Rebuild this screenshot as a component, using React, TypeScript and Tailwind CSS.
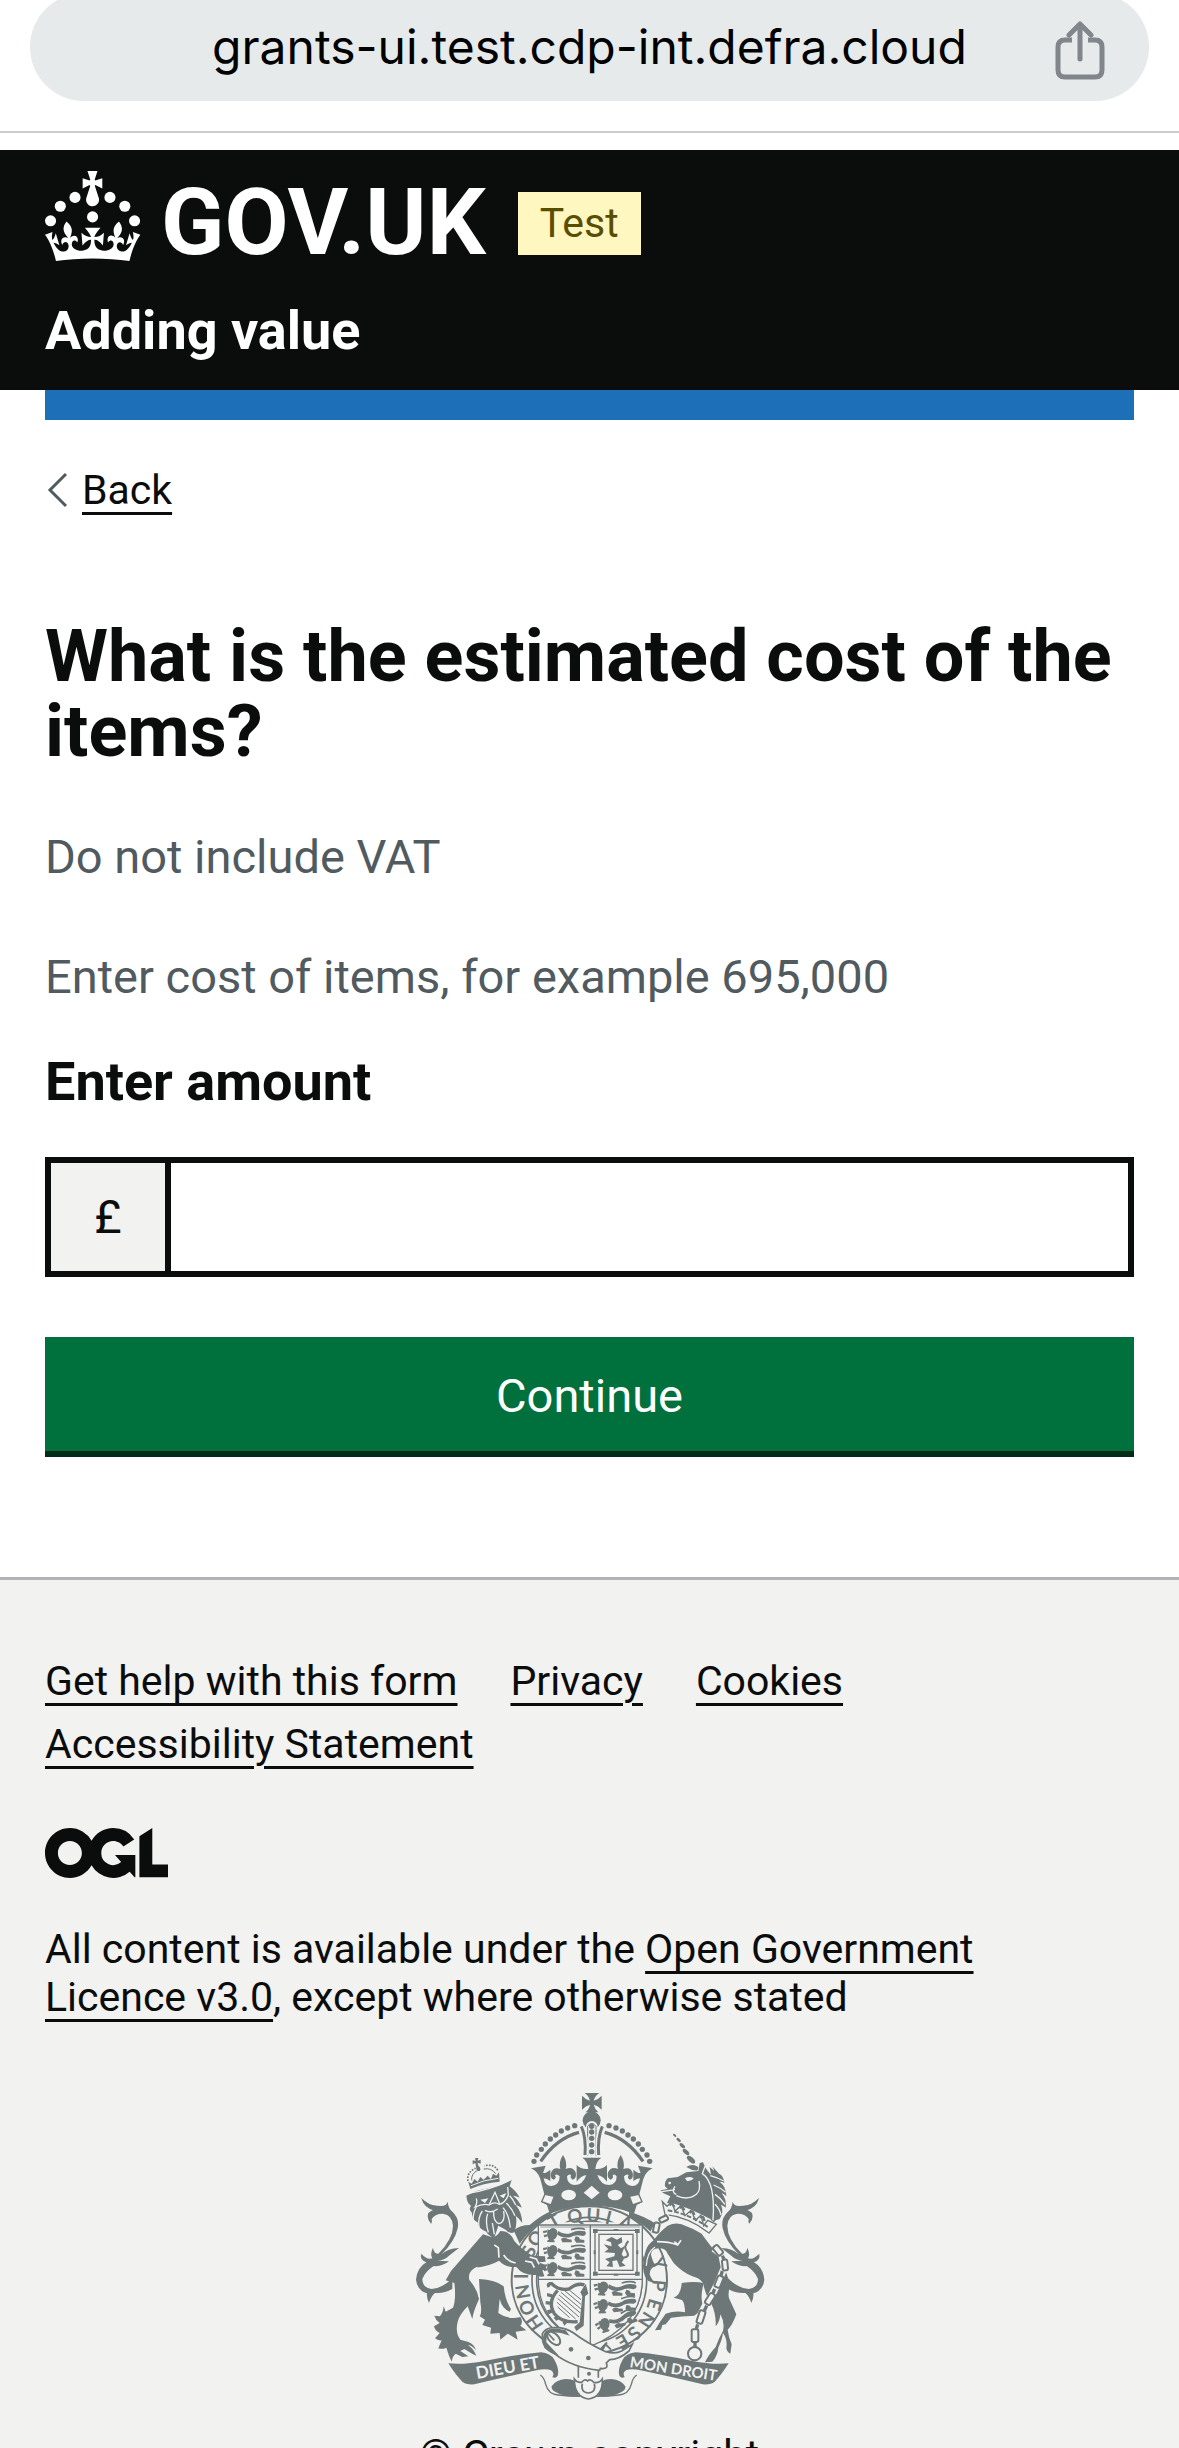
import React from 'react';

const linkClass =
  'underline decoration-[3px] underline-offset-[8px] hover:decoration-[6px]';

function ShareIcon() {
  return (
    <svg viewBox="0 0 50 60" className="h-[60px] w-[50px]" fill="none" stroke="#80868b" strokeWidth="5" aria-hidden="true">
      <path d="M17 19H10Q3 19 3 26V49Q3 56 10 56H40Q47 56 47 49V26Q47 19 40 19H33" />
      <path d="M25 38V4M14 14L25 3L36 14" strokeLinecap="round" strokeLinejoin="round" />
    </svg>
  );
}

function GovCrown() {
  return (
    <svg viewBox="0 0 64 60" className="h-[90px] w-24" fill="#fff" aria-hidden="true">
      <circle cx="20" cy="17.6" r="3.7" />
      <circle cx="10.2" cy="23.5" r="3.7" />
      <circle cx="3.7" cy="33.2" r="3.7" />
      <circle cx="31.7" cy="30.6" r="3.7" />
      <circle cx="43.3" cy="17.6" r="3.7" />
      <circle cx="53.2" cy="23.5" r="3.7" />
      <circle cx="59.7" cy="33.2" r="3.7" />
      <path d="M33.1,9.8c.2-.1.3-.3.5-.5l4.6,2.4v-6.8l-4.6,1.5c-.1-.2-.3-.3-.5-.5l1.9-5.9h-6.7l1.9,5.9c-.2.1-.3.3-.5.5l-4.6-1.5v6.8l4.6-2.4c.1.2.3.3.5.5l-2.6,8c-.9,2.8,1.2,5.7,4.1,5.7h0c3,0,5.1-2.9,4.1-5.7l-2.6-8ZM37,37.9s-3.4,3.8-4.1,6.1c2.2,0,4.2-.5,6.4-2.8l-.7,8.5c-2-2.8-4.4-4.1-5.7-3.8.1,3.1.5,6.7,5.8,7.2,3.7.3,6.7-1.5,7-3.8.4-2.6-2-4.3-3.7-1.6-1.4-4.5,2.4-6.1,4.9-3.2-1.9-4.5-1.8-7.7,2.4-10.9,3,4,2.6,7.3-1.2,11.1,2.4-1.3,6.2,0,4,4.6-1.2-2.8-3.7-2.2-4.2.2-.3,1.7.7,3.7,3,4.2,1.9.3,4.7-.9,7-5.9-1.3,0-2.4.7-3.9,1.7l2.4-8c.6,2.3,1.4,3.7,2.2,4.5.6-1.6.5-2.8,0-5.3l5,1.8c-2.6,3.6-5.2,8.7-7.3,17.5-7.4-1.1-15.7-1.7-24.5-1.7h0c-8.8,0-17.1.6-24.5,1.7-2.1-8.9-4.7-13.9-7.3-17.5l5-1.8c-.5,2.5-.6,3.7,0,5.3.8-.8,1.6-2.3,2.2-4.5l2.4,8c-1.5-1-2.6-1.7-3.9-1.7,2.3,5,5.2,6.2,7,5.9,2.3-.4,3.3-2.4,3-4.2-.5-2.4-3-3.1-4.2-.2-2.2-4.6,1.6-6,4-4.6-3.7-3.7-4.2-7.1-1.2-11.1,4.2,3.2,4.3,6.4,2.4,10.9,2.5-2.8,6.3-1.3,4.9,3.2-1.8-2.7-4.1-1-3.7,1.6.3,2.3,3.3,4.1,7,3.8,5.4-.5,5.7-4.2,5.8-7.2-1.3-.2-3.7,1-5.7,3.8l-.7-8.5c2.2,2.3,4.2,2.7,6.4,2.8-.7-2.3-4.1-6.1-4.1-6.1h10.6,0Z" />
    </svg>
  );
}

function OglLogo() {
  return (
    <svg viewBox="0 0 483.2 195.7" className="h-[50px] w-[123px]" fill="#0b0c0c" role="img" aria-label="Open Government Licence">
      <path d="M421.5 142.8V.1l-50.7 32.3v161.1h112.4v-50.7zm-122.3-9.6A47.12 47.12 0 0 1 221 97.8c0-26 21.1-47.1 47.1-47.1 16.7 0 31.4 8.7 39.7 21.8l42.7-27.2A97.63 97.63 0 0 0 268.1 0c-36.5 0-68.3 20.1-85.1 49.7A98 98 0 0 0 97.8 0C43.9 0 0 43.9 0 97.8s43.9 97.8 97.8 97.8c36.5 0 68.3-20.1 85.1-49.7a97.76 97.76 0 0 0 149.6 25.4l19.4 22.2h3v-87.8h-80l24.3 27.5zM97.8 145c-26 0-47.1-21.1-47.1-47.1s21.1-47.1 47.1-47.1 47.1 21.1 47.1 47.1S123.8 145 97.8 145" />
    </svg>
  );
}

const INK = '#6d7777';
const PAPER = '#f2f2f0';

/* Letters of the garter motto: glyph, centre x, centre y, rotation. */
const motto: [string, number, number, number][] = [
  ['H', 406, 731, -124],
  ['O', 384, 686, -110],
  ['N', 371, 638, -99],
  ['I', 367, 592, -90],
  ['S', 389, 517, -68],
  ['O', 410, 478, -55],
  ['T', 466, 427, -30],
  ['Q', 527, 411, -12],
  ['U', 583, 408, 4],
  ['I', 629, 415, 14],
  ['A', 680, 432, 26],
  ['Y', 780, 553, 68],
  ['P', 780, 620, 95],
  ['E', 766, 677, 107],
  ['N', 743, 723, 122],
  ['S', 706, 763, 135],
  ['E', 671, 787, 150],
];

const crownBeads: [number, number][] = [
  [405, 247], [413, 228], [427, 211], [439, 195], [454, 180], [470, 168], [487, 156], [506, 147], [527, 140],
];

/* Segments of the unicorn's horn: x, y, half length. */
const horn: [number, number, number][] = [
  [827, 169, 6], [839, 183, 8], [850, 200, 10], [861, 219, 12], [876, 242, 15],
];

/* One heraldic lion passant, 140 x 48. */
function Passant({ x, y, tilt = 0 }: { x: number; y: number; tilt?: number }) {
  return (
    <g transform={`translate(${x} ${y}) rotate(${tilt})`}>
      <path d="M12 4q5 6 9-1q10-5 18 4q4 8 2 14q-2 10-12 16q8 3 2 7l-20-1q-2-6 5-7q-9-12-4-32z" />
      <path d="M-2 10l12-2v6l-11 3zM0 22l11-2v6l-9 3z" />
      <path d="M44 10q18 14 40 5q16-9 40-4q8 10-6 14q-24-6-36 3q-24 6-42-8z" />
      <path d="M52 34q10-8 20 0l12 2v8H56zM96 26q14 2 12 9l14 2v8H98l-6-9z" />
      <path d="M82 6Q112-2 124 6" fill="none" stroke={INK} strokeWidth="5" />
    </g>
  );
}

function Tail() {
  return (
    <g>
      <path d="M67 357Q92 382 118 380Q142 384 146 368Q148 388 160 398Q182 418 176 448Q168 486 128 526Q146 508 180 507Q160 522 150 530Q136 544 116 545L150 547Q128 564 104 561Q78 578 70 600Q70 626 98 630Q130 628 160 598L160 630Q136 644 108 642Q96 652 90 672Q82 654 84 643Q54 634 51 602Q54 566 82 550Q68 540 68 525Q84 544 100 538Q92 526 102 506Q104 524 118 524Q162 480 162 440Q160 408 132 404Q108 404 98 420Q100 432 96 434Q82 420 88 402Q96 394 104 392Q78 388 68 357Z" />
      <path d="M67 357Q84 380 118 382L110 396Q74 388 67 357Z" />
      <path d="M84 550Q62 545 66 524Q76 543 92 544Z" />
    </g>
  );
}

function Lion() {
  return (
    <g>
      {/* hind quarters, chest and reaching fore leg */}
      <path d="M252 466L156 576L140 604L166 612Q172 660 162 686L140 698L134 682Q132 704 122 712L106 710Q110 724 122 732L105 742Q108 756 122 762L108 778Q118 786 128 784L118 808Q130 812 142 806L150 830L158 848Q160 832 170 824L190 834L208 832L184 816L196 810L222 826L232 830Q222 806 206 798Q222 800 230 814Q228 796 206 788L184 782Q168 760 176 728Q182 706 206 682L220 720Q222 700 240 660Q240 636 216 606Q204 580 230 566Q270 562 300 545Q320 566 352 564Q372 590 410 588Q424 596 436 592L430 574L442 572L440 558L418 550L440 548L438 532L400 530Q366 510 346 486Q334 456 304 456Q290 480 270 472Z" />
      <path d="M236 566Q208 578 214 602Q238 630 242 656" fill="none" stroke={PAPER} strokeWidth="6" />
      <path d="M286 498L298 506L300 536M314 528Q326 548 350 552M378 546L398 550L406 566M392 534L412 540L420 556" fill="none" stroke={PAPER} strokeWidth="5" />
      {/* far hind leg */}
      <path d="M240 600Q290 602 314 622Q318 664 336 690L332 698Q310 690 302 660L298 702Q328 724 364 714Q374 728 364 740L382 754L350 758L356 782L326 764L304 782L302 762L274 764L276 746L250 738L258 722L242 712Q250 700 244 670Z" />
      {/* far shoulder behind the garter */}
      <path d="M344 454Q364 438 392 438Q424 410 452 398L462 408Q402 436 362 494Z" />
      {/* mane */}
      <path d="M202 350L232 336L306 318L338 302L332 322Q350 334 362 356Q350 350 342 350Q362 366 368 386Q358 380 350 378Q368 398 370 432Q360 418 350 410Q356 430 346 460Q332 466 320 452L298 440L286 476Q268 470 262 458Q238 450 236 430Q220 424 218 400Q208 392 216 380Q204 374 202 350Z" />
      <g fill="none" stroke={PAPER} strokeWidth="4">
        <path d="M202 344Q270 334 336 302" />
        <path d="M232 358Q236 372 228 384Q254 372 270 378Q288 366 300 376Q318 374 328 348L326 324" />
        <path d="M232 384Q224 396 222 420M250 396Q236 416 240 444M266 404Q258 426 268 460M280 432L286 466" />
        <path d="M312 386Q330 406 334 446M322 372Q340 390 348 410M332 350Q342 360 350 378" />
        <path d="M284 398Q282 428 300 434Q320 430 314 396M270 378L288 340L302 374M258 394Q276 404 296 390" />
      </g>
      <path d="M244 362L268 358L258 372ZM302 350L322 342L314 358Z" fill={PAPER} />
      {/* crown worn by the lion */}
      <path d="M208 308L214 330Q252 312 302 308L300 280L292 290L282 284L276 300L266 290L254 302L244 294L236 308L226 300L218 314Z" />
      <path d="M216 320Q254 302 298 298" fill="none" stroke={PAPER} strokeWidth="3" />
      <path d="M207 306Q202 280 230 268M296 274Q286 254 256 260" fill="none" stroke={INK} strokeWidth="5" strokeDasharray="5 4" />
      <path d="M218 304Q216 284 236 274M290 284Q278 266 254 270" fill="none" stroke={INK} strokeWidth="3" />
      <path d="M228 237h10l-2 8 9-3v12l-9-3 2 9q10 8 4 16q-10 2-10-8l-3-16-8 4v-12l9 2z" />
    </g>
  );
}

function Unicorn() {
  return (
    <g>
      {/* body and near hind leg */}
      <path d="M734 580Q728 550 740 516Q746 496 764 484Q780 460 806 440Q836 426 862 442Q886 450 908 464Q926 490 954 524Q978 550 982 582L994 618Q986 640 990 658L1012 706Q1000 740 986 752Q988 772 998 796L994 824Q984 820 982 808Q986 780 972 762Q970 780 958 806Q956 830 940 848L918 850Q928 828 950 804Q960 776 972 756Q978 730 964 706Q962 730 950 742Q952 704 936 672Q920 650 912 612Q900 596 880 592Q850 580 824 552L806 524Q800 508 780 508Q756 508 756 528Q760 546 770 562Q752 566 752 586Q758 604 772 614L748 606Q736 594 734 580Z" />
      <path d="M774 488Q810 488 836 498L846 484M826 488L838 498" fill="none" stroke={PAPER} strokeWidth="5" />
      <path d="M742 560Q744 520 768 504" fill="none" stroke={PAPER} strokeWidth="4" />
      {/* far hind leg */}
      <path d="M848 612Q886 606 914 612Q904 650 910 674Q902 690 896 702L886 710Q846 712 816 716L800 736L790 738L786 752L768 754Q782 728 800 704Q830 694 858 700Q858 676 850 664Q836 658 824 656Q846 648 848 612Z" />
      {/* head */}
      <path d="M785 334L806 330L798 322Q796 308 806 298L836 294L862 280L898 276L902 252L912 250L920 268L936 288L932 264L946 276L940 262L960 284Q974 290 976 312Q970 308 962 308Q982 324 982 352Q976 344 968 342Q984 362 980 386Q972 378 966 378Q976 398 962 420L950 424Q944 436 934 420Q880 390 826 374L804 372L814 352L792 342Z" />
      <g fill="none" stroke={PAPER} strokeWidth="4">
        <path d="M832 350Q866 366 892 346Q906 334 900 306M918 262L910 284Q950 310 942 424" />
        <path d="M934 290Q956 296 974 306M944 318Q964 326 980 340M948 346Q966 358 978 376M948 376Q962 390 966 408" />
        <path d="M788 338L828 332M832 346Q816 340 828 322" />
      </g>
      <path d="M858 298q12-8 26 0q-6 10-20 8z" fill={PAPER} />
      <circle cx="812" cy="312" r="4" fill={PAPER} />
      <path d="M862 264Q880 252 898 264L896 274Q880 276 862 264Z" />
      {horn.map(([x, y, r]) => (
        <ellipse key={x} cx={x} cy={y} rx={r} ry={r / 2} transform={`rotate(42 ${x} ${y})`} />
      ))}
      {/* coronet collar */}
      <path d="M790 368L798 406Q870 414 930 462L952 436L926 424L914 440L906 408L890 424L876 394L858 410L846 380L828 396L818 368L804 382Z" fill={PAPER} stroke={INK} strokeWidth="4" />
      <path d="M806 394Q870 404 926 444" fill="none" stroke={INK} strokeWidth="6" strokeDasharray="14 6" />
      <path d="M812 380q8-12 14 4M842 388q8-12 14 6M872 402q10-12 14 6M904 418q10-12 12 8" fill="none" stroke={INK} strokeWidth="7" />
      {/* chain */}
      <g fill="none" stroke={PAPER} strokeWidth="21">
        <path d="M764 462L780 430L812 414M944 508L968 526L976 566L954 618L932 660L906 716L888 768L888 800" />
      </g>
      <g fill={PAPER} stroke={INK} strokeWidth="6">
        <rect x="-8" y="-15" width="16" height="30" rx="5" transform="translate(772 446) rotate(12)" />
        <rect x="-7" y="-13" width="14" height="26" rx="5" transform="translate(794 420) rotate(65)" />
        <rect x="-9" y="-16" width="18" height="32" rx="6" transform="translate(957 514) rotate(-40)" />
        <rect x="-8" y="-16" width="16" height="32" rx="6" transform="translate(978 558) rotate(-6)" />
        <rect x="-9" y="-18" width="18" height="36" rx="6" transform="translate(960 608) rotate(22)" />
        <rect x="-9" y="-18" width="18" height="36" rx="6" transform="translate(933 660) rotate(32)" />
        <rect x="-9" y="-20" width="18" height="40" rx="6" transform="translate(906 714) rotate(18)" />
        <rect x="-10" y="-19" width="20" height="38" rx="5" transform="translate(888 770)" />
        <circle cx="887" cy="824" r="20" />
      </g>
      <path d="M888 790v14M896 736l-4 14M923 680l-7 16M947 630l-6 14M970 576l-4 14M970 530l6 12" stroke={INK} strokeWidth="10" />
    </g>
  );
}

function ImperialCrown() {
  return (
    <g>
      <path d="M557 42H601Q588 50 584 65Q598 62 608 50V92Q598 80 584 77Q588 92 598 100H559Q570 92 573 77Q560 80 549 92V50Q560 62 573 65Q569 50 557 42Z" />
      <circle cx="578" cy="124" r="27" />
      <rect x="561" y="126" width="35" height="106" rx="17" fill={PAPER} />
      <path d="M566 230V142Q578 124 591 142V230" fill="none" stroke={INK} strokeWidth="3" />
      {[142, 159, 178, 198, 218].map((y) => (
        <circle key={y} cx="578" cy={y} r="8" />
      ))}
      <path d="M547 142Q562 176 558 228M610 142Q595 176 599 228" fill="none" stroke={PAPER} strokeWidth="18" />
      <path d="M547 142Q562 176 558 228M610 142Q595 176 599 228" fill="none" stroke={INK} strokeWidth="9" />
      {[0, 1].map((side) => (
        <g key={side} transform={side ? 'translate(1157 0) scale(-1 1)' : undefined}>
          {crownBeads.map(([x, y]) => (
            <circle key={x} cx={x} cy={y} r="8" />
          ))}
          <path d="M425 247Q472 178 540 160" fill="none" stroke={INK} strokeWidth="10" />
          {/* half of the rim, with its points and fleur-de-lis */}
          <path d="M396 268L440 260L432 282Q440 284 454 272L454 306Q444 298 434 298Q438 322 458 321Q482 318 482 292Q474 284 468 288Q474 298 464 302Q452 298 456 282Q462 262 484 270Q478 250 492 228Q506 250 500 270Q520 260 530 280Q534 298 522 302Q512 298 516 288Q510 284 504 292Q504 316 526 318Q552 318 562 288Q546 290 533 308V258Q546 272 568 270Q566 246 550 236H580V380Q510 380 452 404L444 378L428 370L436 346L424 300Q416 276 396 268Z" />
          <ellipse cx="509" cy="348" rx="22" ry="16" fill={PAPER} />
          <path d="M438 346L466 352L456 378L428 368Z" fill={PAPER} stroke={INK} strokeWidth="4" />
        </g>
      ))}
      <path d="M578 320L602 341L578 361L554 341Z" fill={PAPER} />
    </g>
  );
}

function Shield() {
  return (
    <g>
      <path d="M418 438H730V600Q730 740 574 802Q418 740 418 600Z" fill={PAPER} stroke={INK} strokeWidth="4" />
      <path d="M424 444H724" stroke={INK} strokeWidth="2" />
      <path d="M574 438V800M418 601H730" stroke={INK} strokeWidth="4" />
      <Passant x={434} y={446} />
      <Passant x={434} y={497} />
      <Passant x={434} y={548} />
      <Passant x={586} y={606} />
      <Passant x={584} y={662} tilt={-6} />
      <Passant x={586} y={726} tilt={-20} />
      {/* lion rampant within a double tressure */}
      <rect x="588" y="454" width="126" height="132" fill="none" stroke={INK} strokeWidth="4" />
      <rect x="600" y="466" width="102" height="108" fill="none" stroke={INK} strokeWidth="4" />
      <path d="M582 450h14v12h-14zM708 450h14v12h-14zM582 578h14v12h-14zM708 578h14v12h-14zM644 450h14v6h-14zM644 584h14v6h-14zM584 514h6v12h-6zM712 514h6v12h-6z" />
      <path d="M638 474L654 482L668 474L670 490L656 498L666 508L678 500L668 526Q680 540 668 550L680 560L662 564L654 544L640 546L642 564L622 562L632 550L618 540L646 532L648 522L616 520L628 510L614 496L638 502L636 490L620 484Z" />
      <path d="M670 536Q694 536 684 518Q672 504 688 486" fill="none" stroke={INK} strokeWidth="6" />
      {/* harp */}
      <path d="M450 624Q444 612 458 614Q480 636 510 630Q536 610 556 618" fill="none" stroke={INK} strokeWidth="10" />
      <path d="M476 634Q444 668 466 704Q488 732 536 728" fill="none" stroke={INK} strokeWidth="10" />
      <path d="M560 614L568 644L558 652L554 740L532 756L526 744L542 730L550 652L544 640Z" />
      <path d="M444 642l16 4v10l-16-4zM440 666l18 2v10l-18-2zM444 694l16-4 4 10-16 6zM464 716l12-8 8 8-12 10zM490 728l10-6 4 10-8 8z" />
      <path d="M486 640L546 690M480 648L544 702M476 658L540 714M474 670L530 720M476 684L512 716M498 636L546 676M512 634L546 662" stroke={INK} strokeWidth="3" />
    </g>
  );
}

function Garter() {
  return (
    <g>
      <ellipse cx="571" cy="603" rx="233" ry="221" fill={PAPER} stroke={INK} strokeWidth="6" />
      <ellipse cx="571" cy="603" rx="172" ry="188" fill="none" stroke={INK} strokeWidth="5" />
      <ellipse cx="571" cy="603" rx="158" ry="176" fill="none" stroke={INK} strokeWidth="5" />
      <path d="M440 430L700 430L730 600L420 600Z" fill={PAPER} />
      <g fontFamily="Lato, sans-serif" fontSize="56" fontWeight="700" textAnchor="middle">
        {motto.map(([ch, x, y, r], i) => (
          <text key={i} transform={`translate(${x} ${y}) rotate(${r})`} y="20">
            {ch}
          </text>
        ))}
      </g>
    </g>
  );
}

function Belt() {
  return (
    <g>
      <path d="M600 816L624 790M574 800L584 820M606 820L620 796L636 812" stroke={INK} strokeWidth="6" fill="none" />
      <path d="M538 850V896M598 862V896" stroke={INK} strokeWidth="5" />
      <path d="M430 764Q440 744 470 746Q500 746 524 762Q560 790 620 818Q650 826 668 816L700 796L690 816Q660 842 632 842L622 852Q630 872 604 868L602 874Q520 866 466 824L440 806Q428 790 430 764Z" fill={PAPER} stroke={INK} strokeWidth="5" />
      <path d="M436 806Q426 770 440 756Q458 742 500 754L512 770Q486 760 460 760Q440 764 442 790L480 830Q456 826 436 806Z" />
      <ellipse cx="464" cy="778" rx="24" ry="14" transform="rotate(45 464 778)" fill={PAPER} stroke={INK} strokeWidth="6" />
      <path d="M446 762L466 784" stroke={INK} strokeWidth="5" />
      <circle cx="516" cy="811" r="7" />
      <circle cx="568" cy="837" r="7" />
      <circle cx="570" cy="884" r="6" />
    </g>
  );
}

function Scroll() {
  return (
    <g>
      {[0, 1].map((side) => (
        <g key={side} transform={side ? 'translate(1137 0) scale(-1 1)' : undefined}>
          <path d="M148 853Q196 858 256 846Q350 826 426 820Q454 822 466 842Q482 870 476 890Q470 900 460 894Q468 882 456 874Q440 868 412 874Q310 896 226 916Q202 918 190 908Q170 888 148 853Z" />
          <path d="M424 888Q436 896 440 916Q448 946 478 948Q508 952 544 952" fill="none" stroke={INK} strokeWidth="4" />
          <path d="M458 922Q470 902 500 900Q520 900 526 906L540 952Q500 956 468 938Q456 932 458 922Z" />
        </g>
      ))}
      <path d="M526 900Q534 912 548 910Q556 898 566 906Q574 898 584 910Q600 914 610 900Q612 954 568 960Q526 954 526 900Z" fill={PAPER} stroke={INK} strokeWidth="5" />
      <path d="M550 914Q544 940 568 942Q592 940 586 914" fill="none" stroke={INK} strokeWidth="5" />
      <g fill={PAPER} fontFamily="Lato, sans-serif" fontWeight="700" textAnchor="middle">
        <text transform="translate(329 883) rotate(-10)" fontSize="51">DIEU ET</text>
        <text transform="translate(821 885) rotate(9)" fontSize="45">MON DROIT</text>
      </g>
    </g>
  );
}

function RoyalArms() {
  return (
    <svg viewBox="45 36 1056 930" className="h-[310px] w-[352px]" fill={INK} role="img" aria-label="Royal coat of arms">
      <Tail />
      <g transform="translate(1147 0) scale(-1 1)">
        <Tail />
      </g>
      <path d="M690 398Q740 412 772 436L760 462Q726 430 690 414Z" />
      <Garter />
      <ImperialCrown />
      <Shield />
      <Lion />
      <Unicorn />
      <Scroll />
      <Belt />
    </svg>
  );
}

export default function App() {
  return (
    <div className="flex h-screen flex-col overflow-hidden bg-white font-['Roboto',sans-serif] text-[#0b0c0c]">
      <div className="shrink-0 border-b-2 border-[#c9cbcc] px-[30px] pb-[30px]">
        <div className="-mt-[7px] flex h-[108px] items-center rounded-full bg-[#e6eaeb] pr-11 pl-[94px]">
          <span className="flex-1 text-center font-['Inter',sans-serif] text-[48px] leading-[60px] text-black">
            grants-ui.test.cdp-int.defra.cloud
          </span>
          <button type="button" aria-label="Share" className="mt-2">
            <ShareIcon />
          </button>
        </div>
      </div>

      <header className="mt-[17px] shrink-0 bg-[#0b0c0c] px-[45px] pt-[21px] pb-[29px] text-white">
        <div className="flex items-center">
          <a href="#home" aria-label="GOV.UK" className="flex items-center gap-5">
            <GovCrown />
            <span className="pt-[14px] text-[93px] leading-[76px] font-bold">GOV.UK</span>
          </a>
          <strong className="mt-[15px] ml-8 bg-[#fff7bf] px-[22px] text-[41px] leading-[63px] font-normal text-[#594d00]">
            Test
          </strong>
        </div>
        <a href="#service" className="mt-10 block text-[54px] leading-[60px] font-bold">
          Adding value
        </a>
      </header>
      <div className="mx-[45px] h-[30px] shrink-0 bg-[#1d70b8]" />

      <main className="shrink-0 px-[45px] pb-[120px]">
        <a href="#back" className="mt-[46px] inline-flex items-center gap-[13px]">
          <svg viewBox="0 0 24 36" className="h-9 w-6" fill="none" stroke="#505a5f" strokeWidth="3" aria-hidden="true">
            <path d="M21 2L5 18L21 34" />
          </svg>
          <span className="text-[41px] leading-[48px] underline decoration-[3px] underline-offset-[8px]">Back</span>
        </a>
        <form onSubmit={(e) => e.preventDefault()}>
          <h1 className="mt-[104px] text-[72px] leading-[75px] font-bold">
            What is the estimated cost of the items?
          </h1>
          <p className="mt-[58px] text-[47px] leading-[60px] text-[#505a5f]">Do not include VAT</p>
          <p id="amount-hint" className="mt-[60px] text-[47px] leading-[60px] text-[#505a5f]">
            Enter cost of items, for example 695,000
          </p>
          <label htmlFor="amount" className="mt-[45px] block text-[54px] leading-[60px] font-bold">
            Enter amount
          </label>
          <div className="mt-[45px] flex h-[120px] border-[6px] border-[#0b0c0c]">
            <span className="flex w-[120px] shrink-0 items-center justify-center border-r-[6px] border-[#0b0c0c] bg-[#f2f2f0] text-[47px]" aria-hidden="true">
              £
            </span>
            <input
              id="amount"
              name="amount"
              inputMode="numeric"
              aria-describedby="amount-hint"
              className="min-w-0 flex-1 px-4 text-[47px] outline-none"
            />
          </div>
          <button
            type="submit"
            className="mt-[60px] block h-[120px] w-full border-b-[6px] border-[#002d18] bg-[#00703c] pt-1 text-center text-[47px] text-white"
          >
            Continue
          </button>
        </form>
      </main>

      <footer className="flex-1 border-t-[3px] border-[#b1b4b6] bg-[#f2f2f0] px-[45px] pt-[77px] text-[41px] leading-[48px]">
        <ul className="flex max-w-[980px] flex-wrap gap-x-[53px] gap-y-[15px]">
          <li><a href="#help" className={linkClass}>Get help with this form</a></li>
          <li><a href="#privacy" className={linkClass}>Privacy</a></li>
          <li><a href="#cookies" className={linkClass}>Cookies</a></li>
          <li><a href="#accessibility" className={linkClass}>Accessibility Statement</a></li>
        </ul>
        <div className="mt-[60px]">
          <OglLogo />
        </div>
        <p className="mt-[47px] max-w-[980px]">
          All content is available under the{' '}
          <a href="#ogl" className={linkClass}>Open Government Licence v3.0</a>, except where otherwise stated
        </p>
        <a href="#copyright" className="mt-[70px] flex flex-col items-center gap-[30px]">
          <RoyalArms />
          <span>© Crown copyright</span>
        </a>
      </footer>
    </div>
  );
}
